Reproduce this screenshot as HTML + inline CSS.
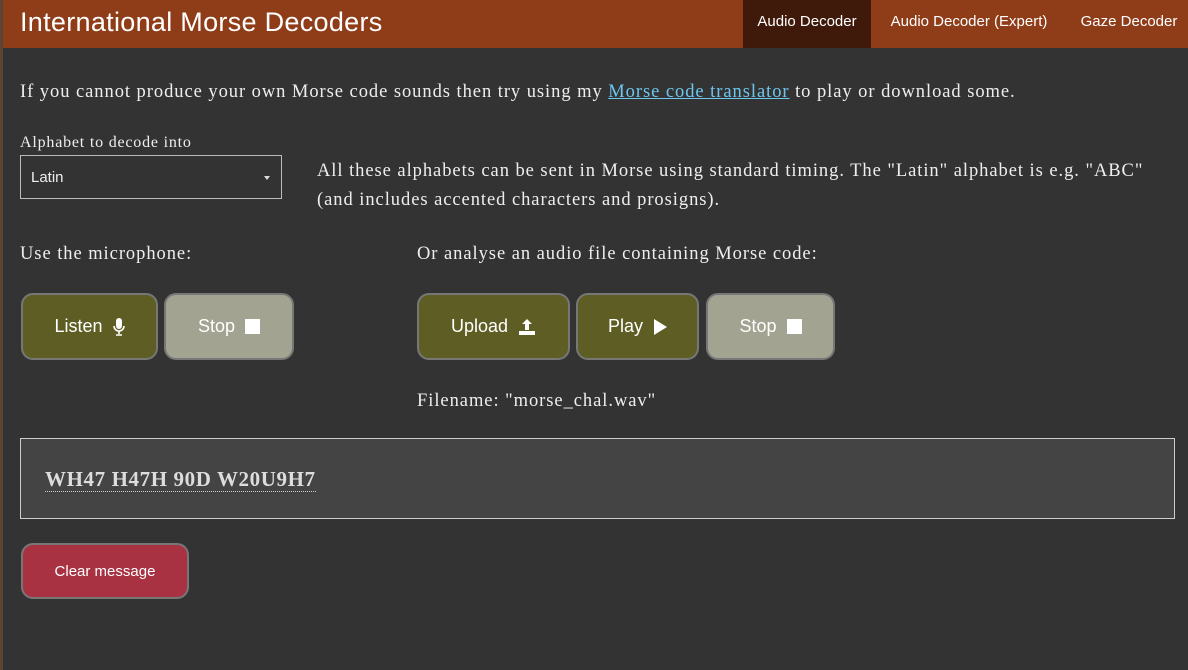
<!DOCTYPE html>
<html><head><style>
*{box-sizing:border-box;margin:0;padding:0}
body{width:1188px;height:670px;background:#333;overflow:hidden;position:relative;font-family:"Liberation Serif",serif;color:#eee}
.strip{position:absolute;left:0;top:0;width:3px;height:670px;background:#5a4535}
.hdr{position:absolute;left:0;top:0;width:1188px;height:48px;background:#8f3c19;border-left:3px solid #5a4535}
.title{position:absolute;left:20px;top:7px;font:27px "Liberation Sans",sans-serif;letter-spacing:0.3px;color:#fff}
.nav{position:absolute;top:0;height:48px;font:15px/44px "Liberation Sans",sans-serif;color:#fff;text-align:center}
.t{position:absolute;font-size:18.5px;letter-spacing:0.95px;white-space:nowrap}
a{color:#6ec6ef}
.sel{position:absolute;left:20px;top:155px;width:262px;height:44px;border:1px solid #bbb;font:15px "Liberation Sans",sans-serif;padding:13px 10px}
.sel:after{content:"";position:absolute;right:11px;top:20px;border:3px solid transparent;border-top:4px solid #ddd}
.b{position:absolute;border:2px solid #777;border-radius:12px;font:18px "Liberation Sans",sans-serif;color:#fff;display:flex;align-items:center;justify-content:center;gap:10px}
.o{background:#5e5e24}.g{background:#a3a391}
.sq{width:15px;height:15px;background:#fff;display:inline-block}
.msg{position:absolute;left:20px;top:438px;width:1155px;height:81px;background:#444;border:1px solid #ccc}
</style></head><body>
<div class="hdr"></div><div class="strip"></div>
<div class="title">International Morse Decoders</div>
<div class="nav" style="left:743px;width:128px;background:#3f1a0a">Audio Decoder</div>
<div class="nav" style="left:873px;width:192px">Audio Decoder (Expert)</div>
<div class="nav" style="left:1067px;width:124px">Gaze Decoder</div>
<div class="t" style="left:20px;top:82px">If you cannot produce your own Morse code sounds then try using my <a href="#">Morse code translator</a> to play or download some.</div>
<div class="t" style="left:20px;top:134px;font-size:16px;letter-spacing:0.8px">Alphabet to decode into</div>
<div class="sel">Latin</div>
<div class="t" style="left:317px;top:161px">All these alphabets can be sent in Morse using standard timing. The "Latin" alphabet is e.g. "ABC"</div>
<div class="t" style="left:317px;top:190px">(and includes accented characters and prosigns).</div>
<div class="t" style="left:20px;top:244px">Use the microphone:</div>
<div class="t" style="left:417px;top:244px">Or analyse an audio file containing Morse code:</div>
<div class="b o" style="left:21px;top:293px;width:137px;height:67px">Listen <svg width="12" height="18" viewBox="0 0 12 18"><rect x="3" y="0" width="6" height="11" rx="3" fill="#fff"/><path d="M1 8a5 5 0 0 0 10 0M6 13v3M3 17h6" stroke="#fff" stroke-width="1.6" fill="none"/></svg></div>
<div class="b g" style="left:164px;top:293px;width:130px;height:67px">Stop <span class="sq"></span></div>
<div class="b o" style="left:417px;top:293px;width:153px;height:67px">Upload <svg width="18" height="18" viewBox="0 0 18 18"><path d="M9 1l-5 5h3v6h4V6h3z" fill="#fff"/><rect x="1" y="13" width="16" height="4" fill="#fff"/></svg></div>
<div class="b o" style="left:576px;top:293px;width:123px;height:67px">Play <svg width="14" height="16"><path d="M1 0l13 8-13 8z" fill="#fff"/></svg></div>
<div class="b g" style="left:706px;top:293px;width:129px;height:67px">Stop <span class="sq"></span></div>
<div class="t" style="left:417px;top:391px">Filename: "morse_chal.wav"</div>
<div class="msg"></div>
<div class="t" style="left:45px;top:467px;font-size:21px;letter-spacing:0.6px;font-weight:bold;color:#ddd;border-bottom:1px dotted #ccc;line-height:24px">WH47 H47H 90D W20U9H7</div>
<div class="b" style="left:21px;top:543px;width:168px;height:56px;background:#a83242;font-size:15px">Clear message</div>
</body></html>
